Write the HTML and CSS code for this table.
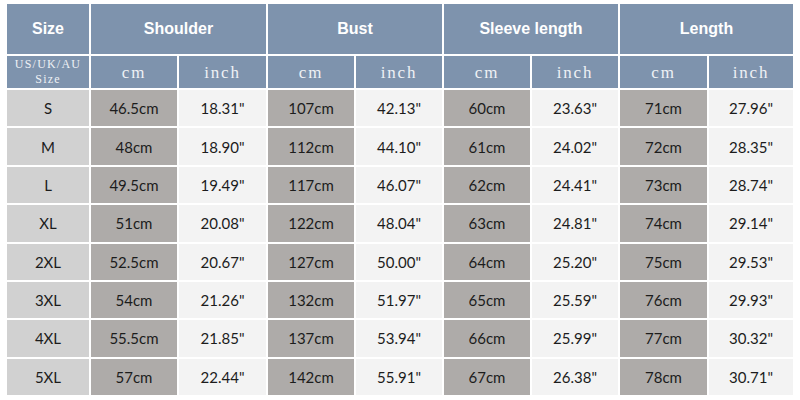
FILE: index.html
```html
<!DOCTYPE html>
<html>
<head>
<meta charset="utf-8">
<link rel="stylesheet" href="styles.css">
</head>
<body>
<div class="chart">
  <div class="h1 span1">Size</div>
  <div class="h1 span2">Shoulder</div>
  <div class="h1 span2">Bust</div>
  <div class="h1 span2">Sleeve length</div>
  <div class="h1 span2">Length</div>

  <div class="h2 small">US/UK/AU<br>Size</div>
  <div class="h2">cm</div><div class="h2">inch</div>
  <div class="h2">cm</div><div class="h2">inch</div>
  <div class="h2">cm</div><div class="h2">inch</div>
  <div class="h2">cm</div><div class="h2">inch</div>

  <div class="c sz">S</div><div class="c cm">46.5cm</div><div class="c in">18.31"</div><div class="c cm">107cm</div><div class="c in">42.13"</div><div class="c cm">60cm</div><div class="c in">23.63"</div><div class="c cm">71cm</div><div class="c in">27.96"</div>
  <div class="c sz">M</div><div class="c cm">48cm</div><div class="c in">18.90"</div><div class="c cm">112cm</div><div class="c in">44.10"</div><div class="c cm">61cm</div><div class="c in">24.02"</div><div class="c cm">72cm</div><div class="c in">28.35"</div>
  <div class="c sz">L</div><div class="c cm">49.5cm</div><div class="c in">19.49"</div><div class="c cm">117cm</div><div class="c in">46.07"</div><div class="c cm">62cm</div><div class="c in">24.41"</div><div class="c cm">73cm</div><div class="c in">28.74"</div>
  <div class="c sz">XL</div><div class="c cm">51cm</div><div class="c in">20.08"</div><div class="c cm">122cm</div><div class="c in">48.04"</div><div class="c cm">63cm</div><div class="c in">24.81"</div><div class="c cm">74cm</div><div class="c in">29.14"</div>
  <div class="c sz">2XL</div><div class="c cm">52.5cm</div><div class="c in">20.67"</div><div class="c cm">127cm</div><div class="c in">50.00"</div><div class="c cm">64cm</div><div class="c in">25.20"</div><div class="c cm">75cm</div><div class="c in">29.53"</div>
  <div class="c sz">3XL</div><div class="c cm">54cm</div><div class="c in">21.26"</div><div class="c cm">132cm</div><div class="c in">51.97"</div><div class="c cm">65cm</div><div class="c in">25.59"</div><div class="c cm">76cm</div><div class="c in">29.93"</div>
  <div class="c sz">4XL</div><div class="c cm">55.5cm</div><div class="c in">21.85"</div><div class="c cm">137cm</div><div class="c in">53.94"</div><div class="c cm">66cm</div><div class="c in">25.99"</div><div class="c cm">77cm</div><div class="c in">30.32"</div>
  <div class="c sz">5XL</div><div class="c cm">57cm</div><div class="c in">22.44"</div><div class="c cm">142cm</div><div class="c in">55.91"</div><div class="c cm">67cm</div><div class="c in">26.38"</div><div class="c cm">78cm</div><div class="c in">30.71"</div>
</div>
</body>
</html>
```
FILE: styles.css
```css
html, body {
  margin: 0;
  padding: 0;
  background: #ffffff;
}
body {
  padding: 4px 7px 0 7px;
}
.chart {
  display: grid;
  width: 786px;
  height: 391px;
  grid-template-columns: 82px 86px 87px 86px 86px 86px 86px 87px 84px;
  grid-template-rows: 50px 32px repeat(8, 1fr);
  gap: 2px;
  background: #ffffff;
}
.chart > div {
  display: flex;
  align-items: center;
  justify-content: center;
  text-align: center;
}
.h1 {
  background: #7e93ad;
  color: #ffffff;
  font-family: "Liberation Sans", Arial, sans-serif;
  font-weight: bold;
  font-size: 16px;
}
.span2 { grid-column: span 2; }
.h2 {
  background: #7e93ad;
  color: #eef1f5;
  font-family: "Liberation Serif", serif;
  font-size: 17px;
  letter-spacing: 1.8px;
  padding-top: 2px;
}
.h2.small {
  font-size: 12px;
  letter-spacing: 1.2px;
  line-height: 15px;
  padding-top: 0;
}
.c {
  font-family: Lato, "Open Sans", sans-serif;
  font-size: 15px;
  color: #1c1c1c;
}
.sz { background: #d1d1d1; }
.cm { background: #aeaba9; }
.in { background: #f3f3f3; }
```
